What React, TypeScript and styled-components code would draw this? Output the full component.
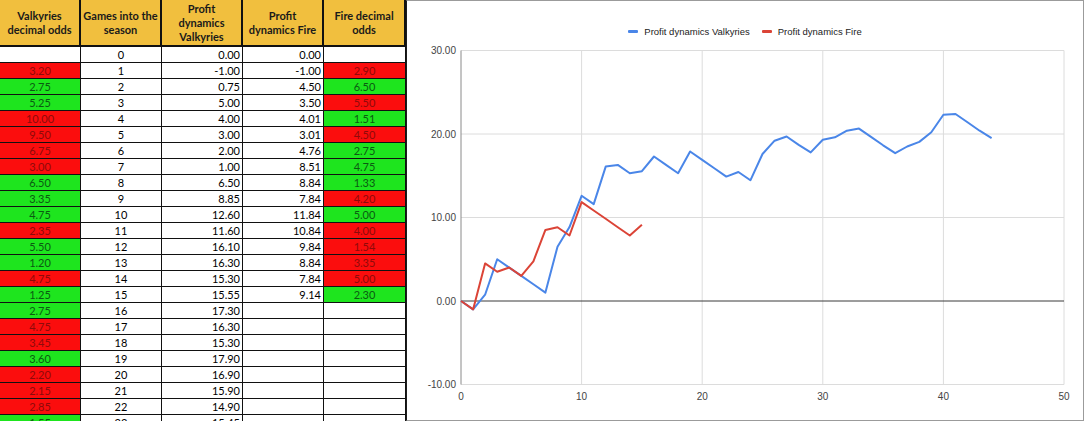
import * as React from "react";
import styled, { createGlobalStyle } from "styled-components";

const GlobalStyle = createGlobalStyle`
  html, body {
    margin: 0;
    padding: 0;
    background: #ffffff;
  }
  body {
    font-family: "Lato", "Liberation Sans", sans-serif;
  }
`;

type Fill = "red" | "green" | "none";

interface Row {
  valkOdds: string;
  valkFill: Fill;
  game: number;
  valkProfit: string;
  fireProfit: string;
  fireOdds: string;
  fireFill: Fill;
}

const R = "red" as Fill;
const G = "green" as Fill;
const N = "none" as Fill;

// [valk odds, fill, valk profit, fire profit, fire odds, fill]
const raw: [string, Fill, string, string, string, Fill][] = [
  ["", N, "0.00", "0.00", "", N],
  ["3.20", R, "-1.00", "-1.00", "2.90", R],
  ["2.75", G, "0.75", "4.50", "6.50", G],
  ["5.25", G, "5.00", "3.50", "5.50", R],
  ["10.00", R, "4.00", "4.01", "1.51", G],
  ["9.50", R, "3.00", "3.01", "4.50", R],
  ["6.75", R, "2.00", "4.76", "2.75", G],
  ["3.00", R, "1.00", "8.51", "4.75", G],
  ["6.50", G, "6.50", "8.84", "1.33", G],
  ["3.35", G, "8.85", "7.84", "4.20", R],
  ["4.75", G, "12.60", "11.84", "5.00", G],
  ["2.35", R, "11.60", "10.84", "4.00", R],
  ["5.50", G, "16.10", "9.84", "1.54", R],
  ["1.20", G, "16.30", "8.84", "3.35", R],
  ["4.75", R, "15.30", "7.84", "5.00", R],
  ["1.25", G, "15.55", "9.14", "2.30", G],
  ["2.75", G, "17.30", "", "", N],
  ["4.75", R, "16.30", "", "", N],
  ["3.45", R, "15.30", "", "", N],
  ["3.60", G, "17.90", "", "", N],
  ["2.20", R, "16.90", "", "", N],
  ["2.15", R, "15.90", "", "", N],
  ["2.85", R, "14.90", "", "", N],
  ["1.55", G, "15.45", "", "", N],
];

const rows: Row[] = raw.map((r, i) => ({
  valkOdds: r[0],
  valkFill: r[1],
  game: i,
  valkProfit: r[2],
  fireProfit: r[3],
  fireOdds: r[4],
  fireFill: r[5],
}));

const valkSeries = [
  0, -1, 0.75, 5, 4, 3, 2, 1, 6.5, 8.85, 12.6, 11.6, 16.1, 16.3, 15.3, 15.55,
  17.3, 16.3, 15.3, 17.9, 16.9, 15.9, 14.9, 15.45, 14.45, 17.6, 19.2, 19.7,
  18.7, 17.8, 19.3, 19.6, 20.4, 20.65, 19.65, 18.65, 17.7, 18.5, 19.05, 20.2,
  22.3, 22.4, 21.4, 20.4, 19.5,
];

const fireSeries = [
  0, -1, 4.5, 3.5, 4.01, 3.01, 4.76, 8.51, 8.84, 7.84, 11.84, 10.84, 9.84,
  8.84, 7.84, 9.14,
];

const fills: Record<Fill, { bg: string; fg: string }> = {
  red: { bg: "#fb0d0d", fg: "#8e0a0a" },
  green: { bg: "#1ee51e", fg: "#0b5a12" },
  none: { bg: "#ffffff", fg: "#000000" },
};

const Page = styled.div`
  display: flex;
  align-items: flex-start;
  width: 1086px;
  height: 421px;
  overflow: hidden;
`;

const Sheet = styled.div`
  display: grid;
  grid-template-columns: 81px 81px 81px 81px 82px;
  grid-template-rows: 47px;
  grid-auto-rows: 16px;
  width: 406px;
  flex-shrink: 0;
`;

const HeaderCell = styled.div`
  box-sizing: border-box;
  background: #f1bf3e;
  border-right: 2px solid #111;
  border-bottom: 2px solid #111;
  display: flex;
  align-items: center;
  justify-content: center;
  text-align: center;
  font-size: 11px;
  font-weight: 700;
  line-height: 14px;
  color: #1a1a1a;
  white-space: nowrap;
`;

const Cell = styled.div<{ $align?: "center" | "right"; $fill?: Fill }>`
  box-sizing: border-box;
  border-right: 1px solid #111;
  border-bottom: 1px solid #111;
  background: ${(p) => fills[p.$fill || "none"].bg};
  color: ${(p) => fills[p.$fill || "none"].fg};
  font-size: 11px;
  line-height: 15px;
  text-align: ${(p) => p.$align || "center"};
  padding-right: ${(p) => (p.$align === "right" ? "2px" : "0")};
  white-space: nowrap;
`;

const ChartPanel = styled.div`
  flex-shrink: 0;
  width: 678px;
  height: 421px;
  box-sizing: border-box;
  border: 1px solid #9b9b9b;
  border-left-color: #1c1c1c;
  display: flex;
  flex-direction: column;
  background: #ffffff;
`;

const Legend = styled.div`
  height: 40px;
  box-sizing: border-box;
  padding-top: 21px;
  display: flex;
  justify-content: center;
  gap: 12px;
  font-family: "Liberation Sans", Arial, sans-serif;
  font-size: 9.5px;
  line-height: 12px;
  color: #222;
`;

const LegendItem = styled.div`
  display: flex;
  align-items: center;
  gap: 6px;
`;

const Swatch = styled.span<{ $color: string }>`
  display: inline-block;
  width: 10px;
  height: 3px;
  border-radius: 1px;
  background: ${(p) => p.$color};
`;

const Plot = styled.svg`
  display: block;
  font-family: "Liberation Sans", Arial, sans-serif;
`;

const BLUE = "#4a86e8";
const RED = "#db4437";

const X0 = 54;
const XS = 12.06;
const Y0 = 300;
const YS = 8.35;
const px = (g: number) => X0 + g * XS;
const py = (v: number) => Y0 - v * YS;

const pathOf = (s: number[]) =>
  s.map((v, i) => `${i === 0 ? "M" : "L"}${px(i).toFixed(1)},${py(v).toFixed(1)}`).join(" ");

function Chart() {
  const yTicks = [30, 20, 10, 0, -10];
  const xTicks = [0, 10, 20, 30, 40, 50];
  return (
    <ChartPanel>
      <Legend>
        <LegendItem>
          <Swatch $color={BLUE} />
          <span>Profit dynamics Valkyries</span>
        </LegendItem>
        <LegendItem>
          <Swatch $color={RED} />
          <span>Profit dynamics Fire</span>
        </LegendItem>
      </Legend>
      <Plot width={676} height={379} viewBox="0 40 676 379">
        {yTicks
          .filter((t) => t !== 0)
          .map((t) => (
            <line key={"h" + t} x1={px(0)} x2={px(50)} y1={py(t)} y2={py(t)} stroke="#dcdcdc" strokeWidth={1} />
          ))}
        {xTicks
          .filter((t) => t !== 0)
          .map((t) => (
            <line key={"v" + t} x1={px(t)} x2={px(t)} y1={py(30)} y2={py(-10)} stroke="#dcdcdc" strokeWidth={1} />
          ))}
        <line x1={px(0)} x2={px(0)} y1={py(30)} y2={py(-10)} stroke="#8a8a8a" strokeWidth={1} />
        <line x1={px(0)} x2={px(50)} y1={py(0)} y2={py(0)} stroke="#3a3a3a" strokeWidth={1} />
        {yTicks.map((t) => (
          <text key={"yl" + t} x={49} y={py(t)} dy="0.35em" textAnchor="end" fontSize={10} fill="#444">
            {t.toFixed(2)}
          </text>
        ))}
        {xTicks.map((t) => (
          <text key={"xl" + t} x={px(t)} y={395} dy="0.35em" textAnchor="middle" fontSize={10} fill="#444">
            {t}
          </text>
        ))}
        <path d={pathOf(valkSeries)} fill="none" stroke={BLUE} strokeWidth={2} strokeLinejoin="round" />
        <path d={pathOf(fireSeries)} fill="none" stroke={RED} strokeWidth={2} strokeLinejoin="round" />
      </Plot>
    </ChartPanel>
  );
}

export default function App() {
  return (
    <Page>
      <GlobalStyle />
      <Sheet>
        <HeaderCell>
          Valkyries
          <br />
          decimal odds
        </HeaderCell>
        <HeaderCell>
          Games into the
          <br />
          season
        </HeaderCell>
        <HeaderCell>
          Profit
          <br />
          dynamics
          <br />
          Valkyries
        </HeaderCell>
        <HeaderCell>
          Profit
          <br />
          dynamics Fire
        </HeaderCell>
        <HeaderCell>
          Fire decimal
          <br />
          odds
        </HeaderCell>
        {rows.map((r) => (
          <React.Fragment key={r.game}>
            <Cell $fill={r.valkFill}>{r.valkOdds}</Cell>
            <Cell>{r.game}</Cell>
            <Cell $align="right">{r.valkProfit}</Cell>
            <Cell $align="right">{r.fireProfit}</Cell>
            <Cell $fill={r.fireFill}>{r.fireOdds}</Cell>
          </React.Fragment>
        ))}
      </Sheet>
      <Chart />
    </Page>
  );
}
